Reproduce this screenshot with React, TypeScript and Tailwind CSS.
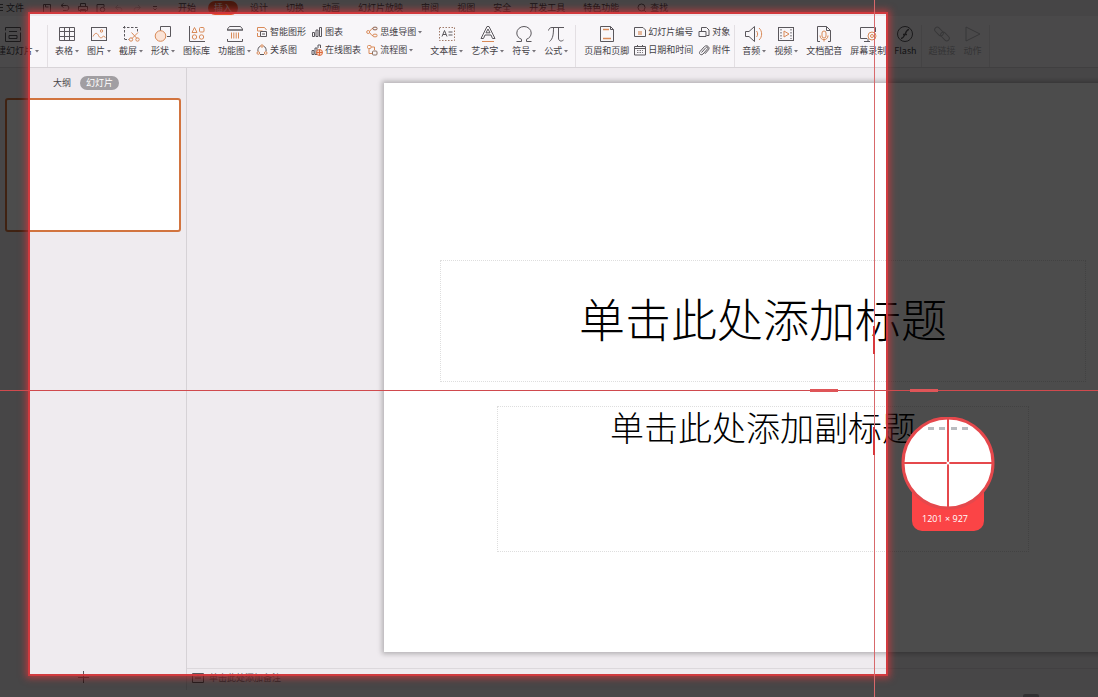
import clsx from 'clsx'
import { ReactNode } from 'react'

const DARK = '#5a575c'
const ORANGE = '#d98a58'

const menusBefore = ['开始']
const menusAfter = ['设计', '切换', '动画', '幻灯片放映', '审阅', '视图', '安全', '开发工具', '特色功能']

function Svg({ size = 18, children }: { size?: number; children: ReactNode }) {
  return (
    <svg
      width={size}
      height={size}
      viewBox={`0 0 ${size} ${size}`}
      fill="none"
      stroke={DARK}
      strokeWidth={1}
      className="shrink-0"
      aria-hidden="true"
    >
      {children}
    </svg>
  )
}

const icons = {
  newSlide: (
    <Svg>
      <path d="M1.5 5.5V2.5h15v3M1.5 7.5v9h15v-9" />
      <path d="M5 6.500h8M5 10.500h8v3H5z" />
    </Svg>
  ),
  table: (
    <Svg>
      <path d="M1.500 2.500h15v13h-15zM1.500 6.500h15M1.500 11.500h15M6.500 2.500v13M11.500 2.500v13" />
    </Svg>
  ),
  picture: (
    <Svg>
      <rect x="1.5" y="2.5" width="15" height="13" />
      <g stroke={ORANGE}>
        <path d="M3 11.500c2-4 4-4 5.500-1s3 3 5 .5l2 1.500" />
        <circle cx="11.500" cy="6" r="1.200" />
      </g>
    </Svg>
  ),
  capture: (
    <Svg>
      <path d="M2.500 1v13M1 2.500h14.500V7M2.500 14.500H7" strokeDasharray="2.500 1.500" />
      <g stroke={ORANGE}>
        <path d="m9.500 7.500 5.500 6M16 7.500l-6 6" />
        <circle cx="9" cy="14.500" r="1.700" />
        <circle cx="15.500" cy="14.500" r="1.700" />
      </g>
    </Svg>
  ),
  shape: (
    <Svg>
      <path d="M6.500 6V1.500h10v10H13" />
      <circle cx="6.500" cy="11" r="5.300" stroke={ORANGE} fill="#fbe3d6" />
    </Svg>
  ),
  library: (
    <Svg>
      <path d="M1.500 1v15.500H17" />
      <g stroke={ORANGE}>
        <path d="M6.500 2.500 9 7.500H4z" />
        <rect x="11.500" y="2.500" width="4.500" height="4.500" rx="1" />
        <circle cx="6.500" cy="12" r="2.200" />
        <circle cx="13.500" cy="12" r="2.200" />
      </g>
    </Svg>
  ),
  feature: (
    <Svg>
      <path d="M3.500 1.500h11l2 2.500v1.500M1.500 5.500V4l2-2.500M1.500 14v2.500h15V14" />
      <path d="M1.500 5h15" strokeWidth="1.500" />
      <path d="M5.500 7.500v6M7.800 7.500v6M10.200 7.500v6M12.500 7.500v6" stroke={ORANGE} />
    </Svg>
  ),
  textBox: (
    <Svg>
      <rect x="1.5" y="2.500" width="15" height="13" strokeDasharray="1.500 1.500" stroke="#a07a68" />
      <path d="M4 11.500 6.500 5.500 9 11.500M5 9.500h3M10.500 7h4M10.500 10h4" />
    </Svg>
  ),
  wordArt: (
    <Svg>
      <path d="m2 13.500 6-12h2l6 12h-2.500l-1.500-3.500H6l-1.500 3.500z" />
      <path d="M7 7.800h4L9 4z" />
      <path d="M3 16.500h12" stroke={ORANGE} />
    </Svg>
  ),
  symbol: (
    <Svg>
      <path d="M1.500 16.500h5v-2.200C3.500 13 1.800 11 1.800 8a7.200 6.500 0 0 1 14.400 0c0 3-1.700 5-4.700 6.300v2.200h5" />
    </Svg>
  ),
  formula: (
    <Svg>
      <path d="M1.500 5.500C2 3.500 3 2.500 5 2.500h12M6.500 2.500C6.500 9 6 14 2.500 16.500M11.500 2.500V13c0 3 2.500 4 5 2" />
    </Svg>
  ),
  header: (
    <Svg>
      <path d="M2.500 1.500h10l3 3v12h-13z" />
      <path d="M12.500 1.500v3h3" />
      <path d="M5 4.500h6M5 13.500h8" stroke={ORANGE} strokeWidth="1.500" />
    </Svg>
  ),
  audio: (
    <Svg>
      <path d="M.5 6.500H4l5.500-5v15l-5.500-5H.5z" />
      <g stroke={ORANGE}>
        <path d="M11.500 6c1.500 1.500 1.500 4.500 0 6M14 3c3.500 3 3.500 9 0 12" />
      </g>
    </Svg>
  ),
  video: (
    <Svg>
      <rect x="1.500" y="2.500" width="15" height="13" />
      <path d="M4 4v10M14 4v10" strokeDasharray="1.500 1.500" />
      <path d="M7 6v6l5-3z" stroke={ORANGE} />
    </Svg>
  ),
  dub: (
    <Svg>
      <path d="M5 16.500H2.500v-15h9l4 4v11H13M11.500 1.500v4h4" />
      <g stroke={ORANGE}>
        <rect x="7" y="6" width="4" height="7" rx="2" />
        <path d="M5 10.500c0 5.500 8 5.500 8 0M9 14.500v2" />
      </g>
    </Svg>
  ),
  record: (
    <Svg>
      <path d="M8 13.500H1.500v-11h15V7M9 13.500v3M5 16.500h6" />
      <g stroke={ORANGE}>
        <circle cx="13" cy="11" r="4" />
        <circle cx="13" cy="11" r="1.500" />
      </g>
    </Svg>
  ),
  flash: (
    <Svg>
      <circle cx="9" cy="9" r="7.500" />
      <path d="M13 4.500c-4 0-3.500 8.500-8 9M7 9.500h4" strokeWidth="1.300" />
    </Svg>
  ),
  link: (
    <Svg>
      <rect x="1" y="4" width="10" height="5" rx="2.500" transform="rotate(45 6 6.500)" />
      <rect x="7" y="9" width="10" height="5" rx="2.500" transform="rotate(45 12 11.500)" />
    </Svg>
  ),
  action: (
    <Svg>
      <path d="M2 2v14l14-7z" />
    </Svg>
  )
}

const smallIcons = {
  smart: (
    <Svg size={12}>
      <path d="M1.500 5V1.500h7L10.500 4M1.500 5h5M1.500 7v3.500h3" stroke={ORANGE} />
      <path d="M4.500 5.500h6v5h-6zM6 8h3" />
    </Svg>
  ),
  relation: (
    <Svg size={12}>
      <path d="M4.500 2C2.500 3 1.500 5 2 7.500M7.500 2c2 1 3 3 2.500 5.500M4 10.500h4" />
      <g stroke={ORANGE}>
        <circle cx="6" cy="2" r="1.200" />
        <circle cx="2.300" cy="9" r="1.300" />
        <circle cx="9.700" cy="9" r="1.300" />
      </g>
    </Svg>
  ),
  chart: (
    <Svg size={12}>
      <path d="M1.500 6.500h2v4h-2zM5 4h2v6.500H5zM8.500 1.500h2v9h-2z" />
    </Svg>
  ),
  onlineChart: (
    <Svg size={12}>
      <path d="M1 6.500h2v4H1zM4 4h2v6.500H4zM7 4V1h2.500v3" />
      <circle cx="8.500" cy="8.500" r="3" stroke="#dc6a3c" fill="#f9d9c8" />
      <path d="M5.500 8.500h6M8.500 5.500v6" stroke="#dc6a3c" />
    </Svg>
  ),
  mind: (
    <Svg size={12}>
      <g stroke={ORANGE}>
        <circle cx="2.200" cy="6" r="1.500" />
        <path d="M3.500 5.500 6 2.500h1M3.500 6.500 6 9.500h1" />
      </g>
      <rect x="7" y="1.200" width="4" height="2.600" rx="1" stroke="#8a5f4c" />
      <rect x="7" y="8.200" width="4" height="2.600" rx="1" stroke={ORANGE} />
    </Svg>
  ),
  flow: (
    <Svg size={12}>
      <g stroke={ORANGE}>
        <rect x="1.500" y="1.500" width="3.500" height="3" rx="1" />
        <path d="M3 5v4.500h3.500M5 3h3.500v3" />
      </g>
      <rect x="6.500" y="7" width="4.500" height="4" rx="1" stroke="#8a6f60" />
    </Svg>
  ),
  slideNo: (
    <Svg size={12}>
      <path d="M.5 1.500h8.500l2.500 2.500v6.500H.5z" />
      <path d="M5 5v4M7 5v4M4 6h4M4 8h4" stroke={ORANGE} strokeWidth="0.700" />
    </Svg>
  ),
  date: (
    <Svg size={12}>
      <path d="M.5 2.500h11v8.500H.5zM.5 4.500h11M3.500 1v2M8.500 1v2" />
      <path d="M3 6.500h6M3 8.500h6" strokeDasharray="1.500 1" strokeWidth="0.800" />
    </Svg>
  ),
  object: (
    <Svg size={12}>
      <path d="M3.500 5V1.500h5L11 4v5.500H8.500M1 5.500h7v5H1z" />
    </Svg>
  ),
  attach: (
    <Svg size={12}>
      <path d="M3.500 8.500 8 3.500c1-1 2.500.2 1.600 1.300L5 10C3 12 .3 9.500 2 7.500L6.500 2.500C8.500.5 12.500 3 10.500 5.800L7 9.800" />
    </Svg>
  )
}

function Caret() {
  return (
    <span className="flex w-[6px] justify-end">
      <svg width="4" height="3" viewBox="0 0 4 3" fill="#77747a" aria-hidden="true">
        <path d="M0 0h4L2 2.500z" />
      </svg>
    </span>
  )
}

interface ToolProps {
  icon: ReactNode
  label: string
  menu?: boolean
  disabled?: boolean
}

function Tool({ icon, label, menu, disabled }: ToolProps) {
  return (
    <button
      type="button"
      disabled={disabled}
      className={clsx('flex shrink-0 flex-col items-center gap-[2px]', disabled && 'opacity-40')}
    >
      {icon}
      <span className="flex items-center leading-3 whitespace-nowrap">
        {label}
        {menu && <Caret />}
      </span>
    </button>
  )
}

function SmallTool({ icon, label, menu }: ToolProps) {
  return (
    <button type="button" className="flex h-[18px] items-center gap-[2px] whitespace-nowrap">
      {icon}
      <span className="flex items-center leading-3">
        {label}
        {menu && <Caret />}
      </span>
    </button>
  )
}

function SmallColumns({ children }: { children: ReactNode }) {
  return <div className="-mt-[2px] -ml-[3px] flex shrink-0 gap-[5px]">{children}</div>
}

function SmallColumn({ children }: { children: ReactNode }) {
  return <div className="flex shrink-0 flex-col items-start">{children}</div>
}

function Group({ children, className }: { children: ReactNode; className?: string }) {
  return (
    <div
      className={clsx('flex h-[42px] shrink-0 items-start gap-2 border-r border-[#e3dfe3]', className)}
    >
      {children}
    </div>
  )
}

function MenuBar() {
  return (
    <nav className="flex h-4 shrink-0 items-center gap-[18px] bg-[#ece8ec] leading-4 whitespace-nowrap">
      <button type="button" className="flex items-center gap-[3px]">
        <svg width="3" height="8" stroke={DARK} aria-hidden="true">
          <path d="M0 .5h3M0 3.500h3M0 6.500h3" />
        </svg>
        文件
      </button>
      <div className="flex items-center gap-2">
        <Svg size={10}>
          <path d="M1.500 9V1.500h7V9M3.500 1.500V4h3" />
        </Svg>
        <Svg size={10}>
          <path d="M1 2.500h5.500c3 0 3 5 0 5H3M3.500.5l-2.500 2 2.500 2" />
        </Svg>
        <Svg size={10}>
          <path d="M2.500 3.500v-3h5v3M.5 3.500h9v4h-9zM2.500 6.500h5v3h-5z" />
        </Svg>
        <Svg size={10}>
          <path d="M4 9.500H1v-8h7V4" />
          <circle cx="6.500" cy="6.500" r="2.200" />
        </Svg>
        <span className="flex gap-2 opacity-30">
          <Svg size={10}>
            <path d="M1.500 4.500h4c3 0 3 4 1 4M4 2 1.500 4.500 4 7" />
          </Svg>
          <Svg size={10}>
            <path d="M8.500 4.500h-4c-3 0-3 4-1 4M6 2l2.500 2.500L6 7" />
          </Svg>
        </span>
        <Svg size={10}>
          <path d="M3 3.500h4M3.500 5.500 5 7l1.500-1.500" />
        </Svg>
      </div>
      {menusBefore.map((m) => (
        <button type="button" key={m}>
          {m}
        </button>
      ))}
      <button
        type="button"
        className="-mx-[6px] h-[14px] rounded-full bg-[#e8532c] px-[6px] leading-[14px] text-white"
      >
        插入
      </button>
      {menusAfter.map((m) => (
        <button type="button" key={m}>
          {m}
        </button>
      ))}
      <button type="button" className="flex items-center gap-[3px]">
        <Svg size={10}>
          <circle cx="4.500" cy="4.500" r="3.500" />
          <path d="m7 7 2.500 2.500" />
        </Svg>
        查找
      </button>
    </nav>
  )
}

function Ribbon() {
  return (
    <div className="flex h-[52px] shrink-0 border-b border-[#d8d4d8] bg-[#f8f6f9] pt-[9px]">
      <Group className="w-12 justify-end overflow-hidden pr-2">
        <Tool icon={icons.newSlide} label="新建幻灯片" menu />
      </Group>
      <Group className="px-[7px]">
        <Tool icon={icons.table} label="表格" menu />
        <Tool icon={icons.picture} label="图片" menu />
        <Tool icon={icons.capture} label="截屏" menu />
        <Tool icon={icons.shape} label="形状" menu />
        <Tool icon={icons.library} label="图标库" />
        <Tool icon={icons.feature} label="功能图" menu />
        <SmallColumns>
          <SmallColumn>
            <SmallTool icon={smallIcons.smart} label="智能图形" />
            <SmallTool icon={smallIcons.relation} label="关系图" />
          </SmallColumn>
          <SmallColumn>
            <SmallTool icon={smallIcons.chart} label="图表" />
            <SmallTool icon={smallIcons.onlineChart} label="在线图表" />
          </SmallColumn>
          <SmallColumn>
            <SmallTool icon={smallIcons.mind} label="思维导图" menu />
            <SmallTool icon={smallIcons.flow} label="流程图" menu />
          </SmallColumn>
        </SmallColumns>
        <Tool icon={icons.textBox} label="文本框" menu />
        <Tool icon={icons.wordArt} label="艺术字" menu />
        <Tool icon={icons.symbol} label="符号" menu />
        <Tool icon={icons.formula} label="公式" menu />
      </Group>
      <Group className="pr-1 pl-2">
        <Tool icon={icons.header} label="页眉和页脚" />
        <SmallColumns>
          <SmallColumn>
            <SmallTool icon={smallIcons.slideNo} label="幻灯片编号" />
            <SmallTool icon={smallIcons.date} label="日期和时间" />
          </SmallColumn>
          <SmallColumn>
            <SmallTool icon={smallIcons.object} label="对象" />
            <SmallTool icon={smallIcons.attach} label="附件" />
          </SmallColumn>
        </SmallColumns>
      </Group>
      <Group className="pr-1 pl-[7px]">
        <Tool icon={icons.audio} label="音频" menu />
        <Tool icon={icons.video} label="视频" menu />
        <Tool icon={icons.dub} label="文档配音" />
        <Tool icon={icons.record} label="屏幕录制" />
        <Tool icon={icons.flash} label="Flash" />
      </Group>
      <Group className="px-[7px]">
        <Tool icon={icons.link} label="超链接" disabled />
        <Tool icon={icons.action} label="动作" disabled />
      </Group>
    </div>
  )
}

function SlidePanel() {
  return (
    <aside className="flex w-[187px] shrink-0 flex-col border-r border-[#d6d2d6] px-[5px] pt-2">
      <div className="flex items-center gap-[9px] pl-12 leading-[14px]">
        <button type="button">大纲</button>
        <button type="button" className="rounded-full bg-[#a19ea2] px-[6px] text-white">
          幻灯片
        </button>
      </div>
      <button
        type="button"
        aria-label="幻灯片 1"
        className="mt-2 h-[134px] w-44 rounded-[3px] border-2 border-[#d2743f] bg-white"
      />
      <button type="button" aria-label="新建幻灯片" className="mt-auto mb-[7px] ml-[72px] w-3">
        <Svg size={12}>
          <path d="M6.500 0v12M1 6.500h11" />
        </Svg>
      </button>
    </aside>
  )
}

function Slide() {
  return (
    <article className="flex aspect-[4/3] w-[758px] shrink-0 flex-col gap-6 self-start bg-white pt-[177px] font-light text-black shadow-[0_0_5px_2px_rgba(0,0,0,0.25)]">
      <h1 className="mx-14 flex h-[122px] items-center justify-center border border-dotted border-[#dedede] pb-2 text-[46px] font-light">
        单击此处添加标题
      </h1>
      <p className="mx-[113px] h-[146px] border border-dotted border-[#dedede] text-center text-[34px] leading-[40px]">
        单击此处添加副标题
      </p>
    </article>
  )
}

function CaptureOverlay() {
  return (
    <div className="pointer-events-none absolute inset-0">
      {/* selected region, everything outside is dimmed */}
      <div className="absolute top-[14px] right-[212px] bottom-[23px] left-[30px] shadow-[0_0_0_2px_rgba(222,58,62,0.8),0_0_7px_4px_rgba(214,56,60,0.75),0_0_0_3000px_rgba(0,0,0,0.7)]" />

      {/* guides */}
      <div className="absolute inset-x-0 top-[390px] h-px bg-[#d04a4e]" />
      <div className="absolute top-[389px] left-[810px] h-[3px] w-7 bg-[#df5558]" />
      <div className="absolute top-[389px] left-[910px] h-[3px] w-7 bg-[#df5558]" />
      <div className="absolute inset-y-0 left-[874px] w-px bg-[#d8686b]" />
      <div className="absolute top-[326px] left-[873px] h-7 w-[2px] bg-[#d8383c]" />
      <div className="absolute top-[427px] left-[873px] h-7 w-[2px] bg-[#d8383c]" />

      {/* magnifier */}
      <div className="absolute top-[417px] left-[901px] flex w-[94px] flex-col items-center">
        <svg width="94" height="94" viewBox="0 0 94 94" className="relative z-10">
          <circle cx="47" cy="46" r="45" fill="#fff" stroke="#e5484c" strokeWidth="3" />
          <path d="M27 11.500h6M38 11.500h6M50 11.500h6M61 11.500h6" stroke="#b9bcc0" strokeWidth="3" />
          <path d="M47 1v90M2 46h90" stroke="#e5484c" strokeWidth="2" />
          <circle cx="47" cy="46" r="1.500" fill="#fff" />
        </svg>
        <div className="-mt-6 w-[72px] rounded-b-[10px] bg-[#fb4446] pt-[26px] pr-[6px] pb-[6px] text-center font-['Open_Sans',sans-serif] leading-3 text-white">
          1201 × 927
        </div>
      </div>
    </div>
  )
}

export default function App() {
  return (
    <div className="relative flex h-screen flex-col overflow-hidden bg-[#efebef] font-['Noto_Sans_CJK_SC',sans-serif] text-[9px] text-[#444146]">
      <MenuBar />
      <Ribbon />
      <div className="flex min-h-0 flex-1">
        <SlidePanel />
        <main className="flex min-w-0 flex-1 flex-col">
          <div className="flex min-h-0 flex-1 overflow-hidden pt-[15px] pl-[197px]">
            <Slide />
          </div>
          <div className="flex h-[22px] shrink-0 items-center gap-[5px] border-t border-[#dcd8dc] pb-1 pl-[5px]">
            <Svg size={12}>
              <path d="M.5 1.500h11v9H.5zM3 6h6M5 4l1-1 1 1" />
            </Svg>
            <input
              aria-label="备注"
              placeholder="单击此处添加备注"
              className="min-w-0 flex-1 leading-4 outline-none placeholder:text-[#6b686d]"
            />
          </div>
        </main>
      </div>
      <footer className="flex h-[7px] shrink-0 items-end justify-end bg-[#f5f3f5] pr-[59px]">
        <div className="h-[3px] w-4 rounded-t-[2px] bg-[#a8a5a9]" />
      </footer>
      <CaptureOverlay />
    </div>
  )
}
